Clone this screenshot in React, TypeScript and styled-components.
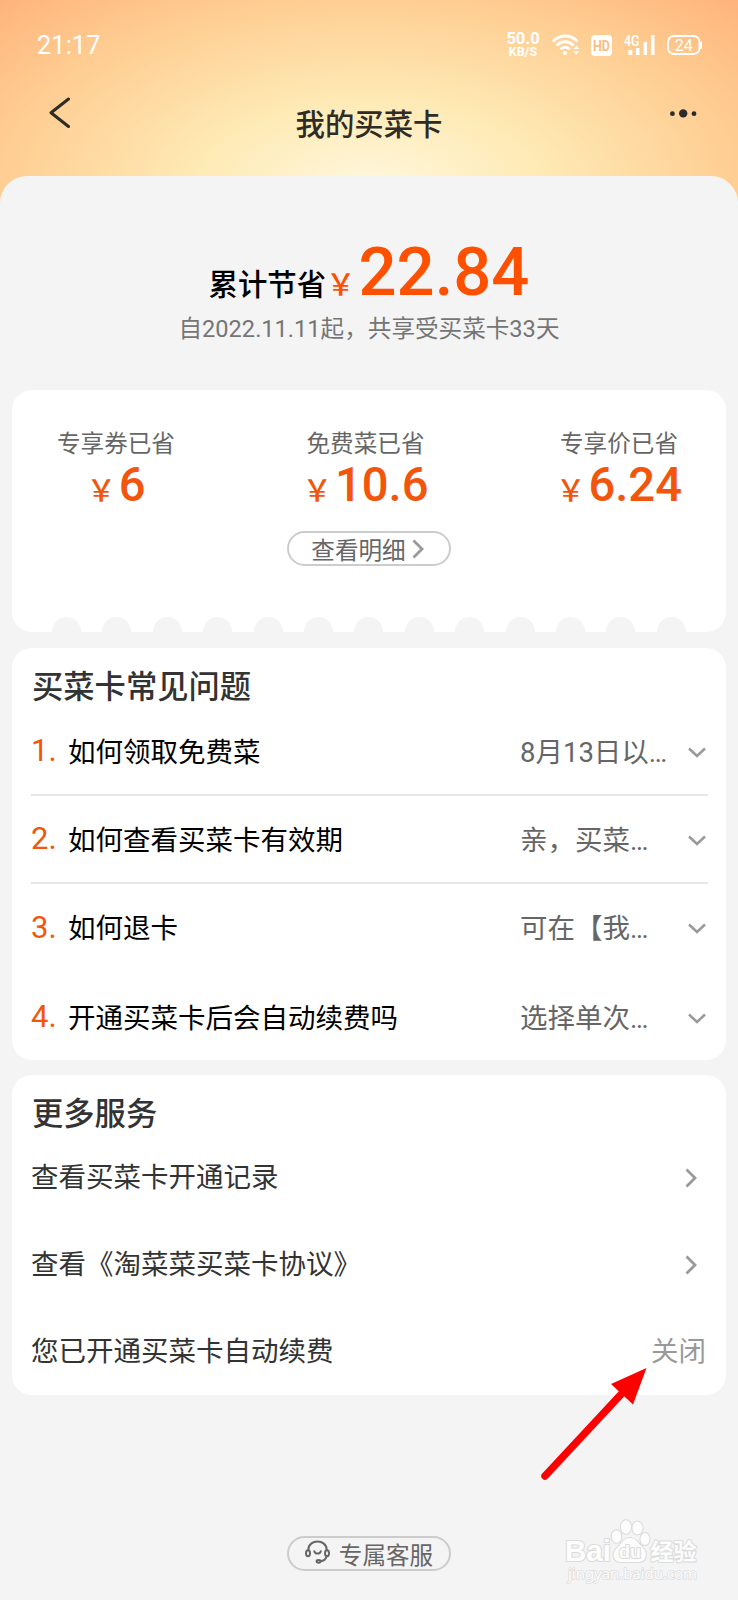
import React from 'react';
import styled, { createGlobalStyle } from 'styled-components';

const GlobalStyle = createGlobalStyle`
  * { box-sizing: border-box; }
  body {
    margin: 0;
    background: #f4f4f4;
    font-family: Roboto, 'Noto Sans CJK SC', sans-serif;
  }
`;

const Page = styled.div`
  position: relative;
  width: 738px;
  height: 1600px;
  overflow: hidden;
  background: radial-gradient(
    ellipse 385px 200px at 369px 190px,
    #fff7de 0%, #feeab5 45%, #fecd92 97%, #ffb179 138%
  );
`;

const StatusBar = styled.div`
  display: flex;
  align-items: center;
  justify-content: space-between;
  height: 90px;
  padding: 0 36px 0 37px;
  color: #fff;
`;

const Clock = styled.span`
  font-size: 25.3px;
  letter-spacing: 0.1px;
`;

const Indicators = styled.div`
  display: flex;
  align-items: center;
  gap: 12px;
  svg { overflow: visible; }
`;

const Speed = styled.div`
  width: 34px;
  text-align: center;
  font-weight: 700;
  font-size: 16.5px;
  line-height: 14px;
  small {
    display: block;
    font-size: 12.5px;
    line-height: 12px;
  }
`;

const NavBar = styled.header`
  display: flex;
  justify-content: space-between;
  height: 86px;
  padding: 6px 40px 0 49px;
`;

const NavTitle = styled.h1`
  margin: 14px 0 0;
  padding-right: 9px;
  font-size: 29.4px;
  line-height: 30px;
  font-weight: 500;
  color: #2f2b26;
`;

const Sheet = styled.main`
  display: flex;
  flex-direction: column;
  height: 1424px;
  padding: 0 12px;
  border-radius: 27px 27px 0 0;
  background: #f4f4f4;
`;

const Summary = styled.section`
  height: 214px;
  padding-top: 59px;
  text-align: center;
`;

const Total = styled.div`
  display: flex;
  align-items: baseline;
  justify-content: center;
  height: 77px;
  line-height: 74px;
  color: #ff5000;
`;

const TotalLabel = styled.span`
  font-size: 29.4px;
  font-weight: 500;
  color: #000;
`;

const Yen = styled.span`
  margin-right: 3px;
  font-size: 29.4px;
  font-weight: 500;
`;

const TotalValue = styled.span`
  font-size: 67px;
  font-weight: 500;
`;

const SummaryNote = styled.p`
  margin: 0;
  font-size: 23.6px;
  line-height: 34px;
  color: #757575;
`;

const Card = styled.section<{ $height: number; $gap: number }>`
  flex: none;
  height: ${p => p.$height}px;
  margin-bottom: ${p => p.$gap}px;
  border-radius: 20px;
  background: #fff;
  overflow: hidden;
`;

const SavingsGrid = styled.div`
  display: flex;
  justify-content: space-between;
  height: 141px;
  padding: 36px 44px 0 45px;
`;

const Saving = styled.div`
  text-align: center;
`;

const SavingLabel = styled.div`
  font-size: 23.6px;
  line-height: 36px;
  color: #666;
`;

const SavingValue = styled.div`
  font-size: 47.2px;
  line-height: 46px;
  font-weight: 500;
  color: #f2560d;
`;

const PillButton = styled.button`
  display: flex;
  align-items: center;
  justify-content: center;
  width: 164px;
  height: 35px;
  margin: 0 auto;
  padding: 0;
  border: 2px solid #ccc;
  border-radius: 18px;
  background: transparent;
  font: 23.6px/31px Roboto, 'Noto Sans CJK SC', sans-serif;
  color: #666;
  svg { flex: none; }
`;

const PillText = styled.span<{ $gap?: number }>`
  padding-top: 5px;
  margin-right: ${p => p.$gap ?? 0}px;
`;

const DetailButton = styled(PillButton)`
  padding-right: 3px;
`;

const Perforation = styled.div`
  display: flex;
  justify-content: space-between;
  margin: 51px 40px 0 40px;
`;

const Notch = styled.i`
  width: 29px;
  height: 15px;
  border-radius: 15px 15px 0 0;
  background: #f4f4f4;
`;

const CardTitle = styled.h2`
  margin: 0;
  padding: 19px 20px 0;
  height: 60px;
  font-size: 31.3px;
  line-height: 42px;
  font-weight: 500;
  color: #333;
`;

const FaqRow = styled.div<{ $line?: boolean; $height?: number }>`
  display: flex;
  align-items: center;
  height: ${p => p.$height ?? 88}px;
  margin: 0 18px 0 19px;
  padding: 3px 2px 0 0;
  border-bottom: 2px solid ${p => (p.$line ? '#e6e6e6' : 'transparent')};
`;

const FaqNumber = styled.span`
  width: 37px;
  margin-top: -3px;
  font-size: 31px;
  line-height: 36px;
  color: #f2560d;
`;

const FaqQuestion = styled.span`
  flex: 1;
  font-size: 27.5px;
  line-height: 40px;
  color: #000;
`;

const FaqAnswer = styled.span`
  width: 168px;
  font-size: 27.5px;
  line-height: 40px;
  white-space: nowrap;
  color: #666;
`;

const ServiceList = styled.div`
  margin-top: -1px;
`;

const ServiceRow = styled.div<{ $inset: number }>`
  display: flex;
  align-items: center;
  justify-content: space-between;
  height: 87.3px;
  padding: 0 ${p => p.$inset}px 0 19px;
  font-size: 27.5px;
  line-height: 40px;
  color: #333;
`;

const CloseLink = styled.span`
  color: #999;
`;

const SupportIcon = styled.svg`
  margin: -4px 9px 0 0;
`;

const Pointer = styled.svg`
  position: absolute;
  left: 530px;
  top: 1360px;
`;

const Watermark = styled.svg`
  position: absolute;
  left: 560px;
  top: 1515px;
`;

const ChevronRight = () => (
  <svg width="12" height="20" viewBox="0 0 12 20" fill="none" stroke="#999" strokeWidth="2.8">
    <path d="M1.5 1.5 10 10 1.5 18.5" />
  </svg>
);

const ChevronDown = () => (
  <svg width="18" height="12" viewBox="0 0 18 12" fill="none" stroke="#999" strokeWidth="2.5">
    <path d="M1 1.5 9 9 17 1.5" />
  </svg>
);

const WifiIcon = () => (
  <svg width="27" height="22" viewBox="0 0 27 22" fill="none" stroke="#fff" strokeWidth="2.9">
    <path d="M1 7.5C8 .2 18.5.2 25.5 7.5M4.7 11.5c5-5.1 12-5.1 17 0M8.4 15.3c3-2.9 6.6-2.9 9.2 0" />
    <circle cx="13" cy="19" r="2" fill="#fff" stroke="none" />
    <path d="m21.3 15 3-3.400 3 3.400zM21.3 17.200l3 3.400 3-3.400z" fill="#fff" stroke="none" />
  </svg>
);

const HdIcon = () => (
  <svg width="21" height="21" viewBox="0 0 21 21">
    <rect width="21" height="21" rx="4" fill="#fff" />
    <text x="10.5" y="15.8" textAnchor="middle" fontFamily="Roboto" fontWeight="700" fontSize="15" textLength="17" lengthAdjust="spacingAndGlyphs" fill="#fbbd84">HD</text>
  </svg>
);

const SignalIcon = () => (
  <svg width="31" height="22" viewBox="0 0 31 22" fill="#fff">
    <text x="0" y="11.5" fontFamily="Roboto" fontWeight="500" fontSize="14" textLength="15.5" lengthAdjust="spacingAndGlyphs">4G</text>
    <path d="M4.5 16h3.8v5H4.5zM12 14h3.5v7H12zM19.5 8H23v13h-3.5zM27 1h3.5v20H27z" />
  </svg>
);

const BatteryIcon = () => (
  <svg width="35" height="20" viewBox="0 0 35 20">
    <rect x="1" y="1" width="31.5" height="18" rx="6" fill="none" stroke="#fff" strokeWidth="1.8" />
    <path d="M33 6h.5A1.5 1.5 0 0 1 35 7.5v5a1.5 1.5 0 0 1-1.5 1.5H33z" fill="#fff" />
    <text x="16.7" y="15.6" textAnchor="middle" fontFamily="Roboto" fontSize="16" fill="#fff">24</text>
  </svg>
);

const savings = [
  { label: '专享券已省', value: '6' },
  { label: '免费菜已省', value: '10.6' },
  { label: '专享价已省', value: '6.24' },
];

const faqs = [
  { q: '如何领取免费菜', a: '8月13日以…', line: true, height: 88 },
  { q: '如何查看买菜卡有效期', a: '亲，买菜…', line: true, height: 88 },
  { q: '如何退卡', a: '可在【我…', line: false, height: 89 },
  { q: '开通买菜卡后会自动续费吗', a: '选择单次…', line: false, height: 90 },
];

export default function App() {
  return (
    <Page>
      <GlobalStyle />
      <StatusBar>
        <Clock>21:17</Clock>
        <Indicators>
          <Speed>50.0<small>KB/S</small></Speed>
          <WifiIcon />
          <HdIcon />
          <SignalIcon />
          <BatteryIcon />
        </Indicators>
      </StatusBar>
      <NavBar>
        <svg width="28" height="34" viewBox="0 0 28 34" fill="none" stroke="#2f2b26" strokeWidth="3" strokeLinecap="round" strokeLinejoin="round">
          <path d="M19.5 3 2 16.7 19.5 30.5" />
        </svg>
        <NavTitle>我的买菜卡</NavTitle>
        <svg width="28" height="34" viewBox="0 0 28 34" fill="#2b2b2b">
          <circle cx="2.4" cy="17.7" r="2.4" />
          <circle cx="13.2" cy="17.4" r="4.2" />
          <circle cx="24" cy="17.7" r="2.4" />
        </svg>
      </NavBar>
      <Sheet>
        <Summary>
          <Total>
            <TotalLabel>累计节省</TotalLabel>
            <Yen>￥</Yen>
            <TotalValue>22.84</TotalValue>
          </Total>
          <SummaryNote>自2022.11.11起，共享受买菜卡33天</SummaryNote>
        </Summary>
        <Card $height={242} $gap={16}>
          <SavingsGrid>
            {savings.map(s => (
              <Saving key={s.label}>
                <SavingLabel>{s.label}</SavingLabel>
                <SavingValue><Yen>￥</Yen>{s.value}</SavingValue>
              </Saving>
            ))}
          </SavingsGrid>
          <DetailButton><PillText $gap={6}>查看明细</PillText><ChevronRight /></DetailButton>
          <Perforation>
            {Array.from({ length: 13 }, (_, i) => <Notch key={i} />)}
          </Perforation>
        </Card>
        <Card $height={412} $gap={15}>
          <CardTitle>买菜卡常见问题</CardTitle>
          {faqs.map((f, i) => (
            <FaqRow key={f.q} $line={f.line} $height={f.height}>
              <FaqNumber>{i + 1}.</FaqNumber>
              <FaqQuestion>{f.q}</FaqQuestion>
              <FaqAnswer>{f.a}</FaqAnswer>
              <ChevronDown />
            </FaqRow>
          ))}
        </Card>
        <Card $height={320} $gap={141}>
          <CardTitle>更多服务</CardTitle>
          <ServiceList>
            <ServiceRow $inset={29}>查看买菜卡开通记录<ChevronRight /></ServiceRow>
            <ServiceRow $inset={29}>查看《淘菜菜买菜卡协议》<ChevronRight /></ServiceRow>
            <ServiceRow $inset={20}>您已开通买菜卡自动续费<CloseLink>关闭</CloseLink></ServiceRow>
          </ServiceList>
        </Card>
        <PillButton>
          <SupportIcon width="25" height="24" viewBox="0 0 25 24" fill="none" stroke="#666" strokeWidth="2" strokeLinecap="round">
            <path d="M3.3 10C3.3-1.3 21.7-1.3 21.7 10M21.5 16.5c-.8 3-3 4.5-6 4.7" />
            <ellipse cx="3" cy="13.3" rx="2" ry="3" />
            <ellipse cx="22" cy="13.3" rx="2" ry="3" />
            <ellipse cx="13.6" cy="21.3" rx="2" ry="1.4" />
            <path d="M9.3 11.3c1.2 3 5.3 3 6.5 0" />
          </SupportIcon>
          <PillText>专属客服</PillText>
        </PillButton>
      </Sheet>
      <Pointer width="125" height="125" viewBox="0 0 125 125" fill="#f00">
        <path d="M15 116 96 29" stroke="#f00" strokeWidth="7.5" strokeLinecap="round" />
        <path d="M116.5 8 81 24 103 44.5z" />
      </Pointer>
      <Watermark width="145" height="75" viewBox="0 0 145 75" fill="#fdfdfd" stroke="#dcdcdc" strokeWidth="2.2" paintOrder="stroke" strokeLinejoin="round">
        <text x="5" y="46" fontFamily="Liberation Sans" fontWeight="700" fontSize="30" textLength="46" lengthAdjust="spacingAndGlyphs">Bai</text>
        <path d="M70 23c6 0 8 5 12 9 7 6 4 15-3 15H61c-8 0-10-9-3-15 4-4 6-9 12-9z" />
        <ellipse cx="56.5" cy="21.5" rx="4.8" ry="6.3" />
        <ellipse cx="66" cy="12" rx="5" ry="6.7" />
        <ellipse cx="77.5" cy="13" rx="5" ry="6.5" />
        <ellipse cx="85" cy="24" rx="4.5" ry="6" />
        <text x="70" y="43" textAnchor="middle" fontFamily="Liberation Sans" fontWeight="700" fontSize="18">du</text>
        <text x="90.5" y="45" fontFamily="Noto Sans CJK SC" fontWeight="700" fontSize="23">经验</text>
        <text x="8" y="64" fontFamily="Noto Sans" fontSize="15" strokeWidth="1.5" textLength="129" lengthAdjust="spacingAndGlyphs">jingyan.baidu.com</text>
      </Watermark>
    </Page>
  );
}
